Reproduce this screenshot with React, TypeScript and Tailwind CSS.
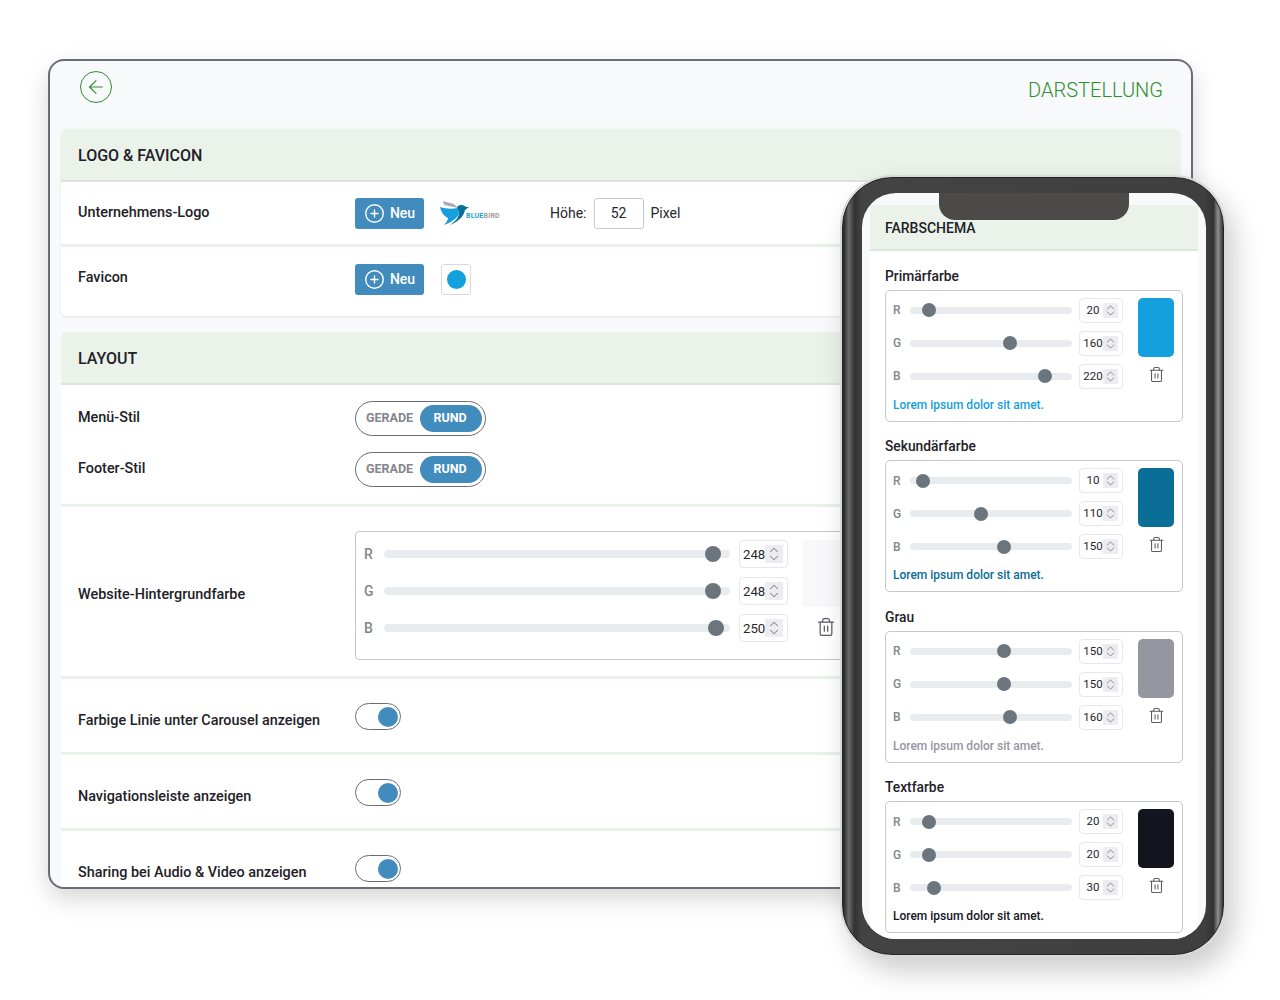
import { ArrowLeft, ChevronDown, ChevronUp, CirclePlus, Trash2 } from "lucide-react";

const FONT = "font-['Roboto','Liberation_Sans',sans-serif]";

function SpinInput({ value, big }: { value: number; big?: boolean }) {
  return (
    <div
      className={
        big
          ? "flex h-[28px] w-[49px] shrink-0 items-center rounded-[4px] border border-[#e8e8ec] bg-white pl-[3px] pr-[4px]"
          : "flex h-[25px] w-[44px] shrink-0 items-center rounded-[4px] border border-[#e8e8ec] bg-white pl-[3px] pr-[4px]"
      }
    >
      <span
        className={
          big
            ? "flex-1 pt-[1px] text-center text-[13.2px] leading-none text-[#26262c]"
            : "flex-1 pt-[1px] text-center text-[11.5px] leading-none text-[#26262c]"
        }
      >
        {value}
      </span>
      <span
        className={
          big
            ? "flex h-[18px] w-[18px] flex-col items-center justify-center bg-[#ececf1] text-[#85858d]"
            : "flex h-[15px] w-[15px] flex-col items-center justify-center bg-[#ececf1] text-[#85858d]"
        }
      >
        <ChevronUp size={big ? 14 : 13} strokeWidth={1.75} className={big ? "-my-[3px]" : "-my-[3.5px]"} />
        <ChevronDown size={big ? 14 : 13} strokeWidth={1.75} className={big ? "-my-[3px]" : "-my-[3.5px]"} />
      </span>
    </div>
  );
}

function Slider({ label, value, big }: { label: string; value: number; big?: boolean }) {
  const thumb = big ? 16 : 14;
  const trackWidth = big ? 346 : 162;
  const left = (value / 255) * (trackWidth - thumb);

  return (
    <div className={big ? "flex h-[28px] items-center" : "flex h-[25px] items-center"}>
      <span
        className={
          big
            ? "w-[20px] text-[14px] font-medium leading-none text-[#85858d]"
            : "w-[17px] text-[12px] font-medium leading-none text-[#85858d]"
        }
      >
        {label}
      </span>
      <div
        className={
          big
            ? "relative mr-[9px] h-[8px] w-[346px] rounded-full bg-[#e9ecef]"
            : "relative mr-[7px] h-[7px] w-[162px] rounded-full bg-[#e9ecef]"
        }
      >
        <span
          className={
            big
              ? "absolute top-[-4px] h-[16px] w-[16px] rounded-full bg-[#6c757d]"
              : "absolute top-[-3.5px] h-[14px] w-[14px] rounded-full bg-[#6c757d]"
          }
          style={{ left }}
        />
      </div>
      <SpinInput value={value} big={big} />
    </div>
  );
}

function ColorBox({
  title,
  values,
  swatchClass,
  textClass,
}: {
  title: string;
  values: number[];
  swatchClass: string;
  textClass: string;
}) {
  return (
    <div>
      <div className="mb-[4px] text-[13.8px] font-medium leading-[20px] text-[#212127]">{title}</div>
      <div className="h-[132px] rounded-[5px] border border-[#c8c8cc] bg-white pl-[7px] pt-[7px]">
        <div className="flex">
          <div className="flex flex-col gap-[8px]">
            <Slider label="R" value={values[0]} />
            <Slider label="G" value={values[1]} />
            <Slider label="B" value={values[2]} />
          </div>
          <div className="ml-[15px] flex flex-col items-center">
            <div className={`h-[59px] w-[36px] rounded-[5px] ${swatchClass}`} />
            <Trash2 size={17} strokeWidth={1.5} className="mt-[9px] text-[#5c5c64]" />
          </div>
        </div>
        <div className={`mt-[8px] text-[12px] font-medium leading-[16px] ${textClass}`}>
          Lorem ipsum dolor sit amet.
        </div>
      </div>
    </div>
  );
}

function NewButton() {
  return (
    <button className="flex h-[31px] w-[69px] items-center justify-center gap-[5px] rounded-[3px] bg-[#428bbd] text-[14px] font-medium text-white">
      <CirclePlus size={21} strokeWidth={1.6} />
      Neu
    </button>
  );
}

function BlueBirdLogo() {
  return (
    <div className="flex h-[26px] w-[61px] items-end">
      <svg width="26" height="26" viewBox="0 0 26 26" className="shrink-0 overflow-visible">
        <path d="M3 1 L4 5 L18 8 L14 4 Z" fill="#a9adb1" />
        <path d="M0 7 C6 9 12 9 18 8 C20 12 19 16 15 19 C12 21 10 23 4 25 C6 23 8 20 8 18 C4 16 1 12 0 7 Z" fill="#159fdd" />
        <path d="M17 7 C20 4 24 5 26 7 L29 7 L25 10 C24 15 20 21 10 25 C16 21 20 16 19 11 Z" fill="#0b6e99" />
      </svg>
      <span className="mb-[6px] text-[7px] font-bold leading-none tracking-[0.2px] text-[#9a9ca0]">
        <span className="text-[#159fdd]">BLUE</span>BIRD
      </span>
    </div>
  );
}

function SegmentToggle() {
  return (
    <div className="flex h-[35px] w-[131px] items-center justify-between rounded-full border border-[#6b6b75] bg-white pl-[10px] pr-[3px]">
      <span className="text-[12.5px] font-bold text-[#85858d]">GERADE</span>
      <span className="flex h-[27px] w-[62px] items-center justify-center rounded-full bg-[#428bbd] pr-[2px] text-[12.5px] font-bold text-white">
        RUND
      </span>
    </div>
  );
}

function SwitchRow({ label, last }: { label: string; last?: boolean }) {
  return (
    <div className={last ? "flex h-[73px] pl-[17px]" : "flex h-[76px] border-b-[3px] border-[#e9f2e9] pl-[17px]"}>
      <span className="w-[277px] pt-[32px] text-[14.4px] font-medium leading-[20px] text-[#212127]">{label}</span>
      <div className="pt-[24px]">
        <div className="flex h-[27px] w-[46px] items-center justify-end rounded-full border border-[#6b6b75] bg-white pr-[2px]">
          <span className="h-[20px] w-[20px] rounded-full bg-[#428bbd]" />
        </div>
      </div>
    </div>
  );
}

function SectionHeader({ title }: { title: string }) {
  return (
    <div className="flex h-[53px] items-center rounded-t-[6px] border-b-2 border-[#dfe2df] bg-[#ebf2ea] pl-[17px] pt-[2px] text-[16px] font-medium text-[#212127]">
      {title}
    </div>
  );
}

function Phone() {
  return (
    <div className="absolute left-[840px] top-[175px] h-[782px] w-[386px] rounded-[52px] bg-[#dadada] p-[2px] shadow-[8px_14px_28px_rgba(0,0,0,0.2)]">
      <div className="h-full w-full rounded-[50px] border-[1.5px] border-[#262626] bg-[linear-gradient(90deg,#222222_0%,#6a6a6a_1.5%,#333333_3%,#444343_5%,#403f3f_95%,#333333_97.5%,#8f8f8f_98.7%,#333333_100%)] pb-[15.5px] pl-[19px] pr-[17px] pt-[14.5px]">
        <div className="relative h-full overflow-hidden rounded-[34px] bg-[#f8f9fb] px-[8px] pt-[12px]">
          <div className="absolute left-[77px] top-0 h-[27px] w-[190px] rounded-b-[16px] bg-[#4c4a49]" />
          <div className="h-full bg-white">
            <div className="flex h-[46px] items-end border-b-2 border-[#dfe8df] bg-[#ebf2ea] pb-[11px] pl-[15px] text-[14px] font-medium leading-[20px] text-[#212127]">
              FARBSCHEMA
            </div>
            <div className="flex flex-col gap-[14.5px] pl-[15px] pr-[15px] pt-[15px]">
              <ColorBox
                title="Primärfarbe"
                values={[20, 160, 220]}
                swatchClass="bg-[#14a0dc]"
                textClass="text-[#14a0dc]"
              />
              <ColorBox
                title="Sekundärfarbe"
                values={[10, 110, 150]}
                swatchClass="bg-[#0a6e96]"
                textClass="text-[#0a6e96]"
              />
              <ColorBox title="Grau" values={[150, 150, 160]} swatchClass="bg-[#9696a0]" textClass="text-[#9696a0]" />
              <ColorBox title="Textfarbe" values={[20, 20, 30]} swatchClass="bg-[#14141e]" textClass="text-[#14141e]" />
            </div>
          </div>
        </div>
      </div>
    </div>
  );
}

export default function App() {
  return (
    <div className={`relative h-[1000px] w-[1280px] overflow-hidden bg-white pl-[48px] pt-[59px] ${FONT}`}>
      <div className="h-[830px] w-[1145px] overflow-hidden rounded-[16px] border-2 border-[#6b6b75] bg-[#f8f9fb] shadow-[0_10px_24px_rgba(0,0,0,0.16)]">
        <div className="flex h-[68px] items-start justify-between pl-[30px] pr-[28px] pt-[10px]">
          <span className="flex h-[32px] w-[32px] items-center justify-center rounded-full border-[1.5px] border-[#2f8f2f] text-[#2f8f2f]">
            <ArrowLeft size={22} strokeWidth={1.25} />
          </span>
          <span className="pt-[7px] text-[20px] font-light leading-[24px] text-[#2f8f2f]">DARSTELLUNG</span>
        </div>

        <div className="mx-[11px] flex flex-col gap-[16px]">
          <section className="rounded-[6px] bg-white shadow-[0_1px_3px_rgba(0,0,0,0.08)]">
            <SectionHeader title="LOGO & FAVICON" />
            <div className="flex h-[65px] items-center border-b-[3px] border-[#e9f2e9] pl-[17px]">
              <span className="w-[277px] text-[14.4px] font-medium text-[#212127]">Unternehmens-Logo</span>
              <NewButton />
              <div className="ml-[16px]">
                <BlueBirdLogo />
              </div>
              <span className="ml-[49px] text-[14px] text-[#26262c]">Höhe:</span>
              <span className="ml-[7px] flex h-[31px] w-[50px] items-center justify-center rounded-[3px] border border-[#c8c8cc] text-[14px] text-[#26262c]">
                52
              </span>
              <span className="ml-[7px] text-[14px] text-[#26262c]">Pixel</span>
            </div>
            <div className="flex h-[69px] items-start pl-[17px] pt-[17px]">
              <span className="w-[277px] pt-[4px] text-[14.4px] font-medium leading-[20px] text-[#212127]">Favicon</span>
              <NewButton />
              <span className="ml-[17px] flex h-[31px] w-[30px] items-center justify-center rounded-[3px] border border-[#d8d8dc]">
                <span className="h-[19px] w-[19px] rounded-full bg-[#14a0dc]" />
              </span>
            </div>
          </section>

          <section className="rounded-[6px] bg-white">
            <SectionHeader title="LAYOUT" />
            <div className="flex h-[122px] border-b-[3px] border-[#e9f2e9] pl-[17px] pt-[16px]">
              <div className="flex w-[277px] flex-col gap-[31px] pt-[7px] text-[14.4px] font-medium leading-[20px] text-[#212127]">
                <span>Menü-Stil</span>
                <span>Footer-Stil</span>
              </div>
              <div className="flex flex-col gap-[16px]">
                <SegmentToggle />
                <SegmentToggle />
              </div>
            </div>
            <div className="flex h-[172px] items-center border-b-[3px] border-[#e9f2e9] pl-[17px] pt-[8px]">
              <span className="w-[277px] pb-[2px] text-[14.4px] font-medium text-[#212127]">
                Website-Hintergrundfarbe
              </span>
              <div className="h-[129px] w-[520px] rounded-[4px] border border-[#c8c8cc] pl-[8px] pt-[8px]">
                <div className="flex">
                  <div className="flex flex-col gap-[9px]">
                    <Slider big label="R" value={248} />
                    <Slider big label="G" value={248} />
                    <Slider big label="B" value={250} />
                  </div>
                  <div className="ml-[14px] flex flex-col">
                    <div className="h-[67px] w-[46px] rounded-[5px] bg-[#f8f8fa]" />
                    <Trash2 size={20} strokeWidth={1.5} className="ml-[14px] mt-[10px] text-[#5c5c64]" />
                  </div>
                </div>
              </div>
            </div>
            <SwitchRow label="Farbige Linie unter Carousel anzeigen" />
            <SwitchRow label="Navigationsleiste anzeigen" />
            <SwitchRow label="Sharing bei Audio & Video anzeigen" last />
          </section>
        </div>
      </div>
      <Phone />
    </div>
  );
}
